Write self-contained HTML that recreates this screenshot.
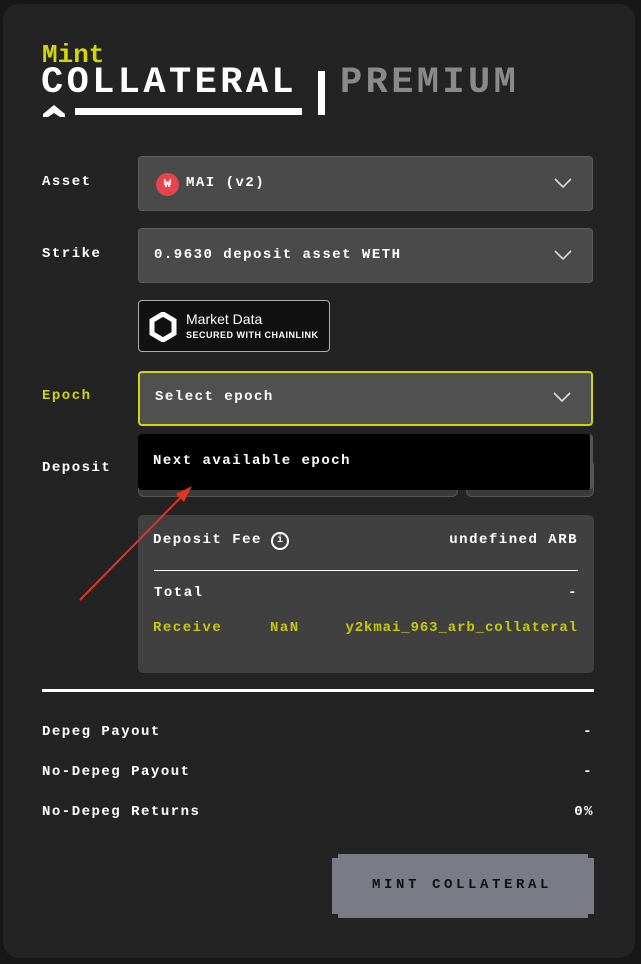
<!DOCTYPE html>
<html><head><meta charset="utf-8"><style>
*{box-sizing:border-box;margin:0;padding:0}
body{width:641px;height:964px;background:#171717;font-family:"Liberation Mono",monospace;font-weight:bold;color:#fff;position:relative;overflow:hidden}
.card{position:absolute;left:3px;top:4px;width:632px;height:954px;background:#232323;border-radius:16px}
.a{position:absolute}
.t{font-size:14px;letter-spacing:1.5px;white-space:nowrap}
.sel{position:absolute;left:138px;width:455px;height:55px;background:#4a4a4a;border:1px solid #5c5c5c;border-radius:4px}
.sel .t{position:absolute;left:15px;top:18px}
.chev{position:absolute;right:20px;top:21px}
.lbl{position:absolute;left:42px}
</style></head><body>
<div class="card"></div>
<div class="a" style="left:42px;top:40px;font-size:26px;color:#d4d40a;letter-spacing:0px">Mint</div>
<div class="a" style="left:41px;top:62px;font-size:37px;letter-spacing:3.4px">COLLATERAL</div>
<div class="a" style="left:340px;top:62px;font-size:37px;letter-spacing:3.4px;color:#8a8a8a">PREMIUM</div>
<div class="a" style="left:318px;top:71px;width:7px;height:44px;background:#fff"></div>
<div class="a" style="left:75px;top:108px;width:227px;height:7px;background:#fff"></div>
<svg class="a" style="left:42px;top:105px" width="24" height="16"><polygon points="12,0 23,9 23,12 18,12 12,8 6,12 1,12 1,9" fill="#fff"/></svg>

<div class="lbl t" style="top:174px">Asset</div>
<div class="sel" style="top:156px"><div class="a" style="left:17px;top:16px;width:23px;height:23px;border-radius:50%;background:#e8444c;color:#fff;font-size:12px;text-align:center;line-height:23px">₩</div><div class="t" style="left:47px!important">MAI (v2)</div><svg class="chev" width="18" height="11"><path d="M1 1 L9 9 L17 1" stroke="#ddd" stroke-width="1.6" fill="none"/></svg></div>
<div class="lbl t" style="top:246px">Strike</div>
<div class="sel" style="top:228px"><div class="t">0.9630 deposit asset WETH</div><svg class="chev" width="18" height="11"><path d="M1 1 L9 9 L17 1" stroke="#ddd" stroke-width="1.6" fill="none"/></svg></div>

<div class="a" style="left:138px;top:300px;width:192px;height:52px;background:#111;border:1px solid #aaa;border-radius:4px">
<svg class="a" style="left:10px;top:11px" width="28" height="30"><polygon points="14,2 25,8.5 25,21.5 14,28 3,21.5 3,8.5" fill="none" stroke="#fff" stroke-width="5"/></svg>
<div class="a" style="left:47px;top:10px;font-family:'Liberation Sans',sans-serif;font-size:14px;font-weight:normal">Market Data</div>
<div class="a" style="left:47px;top:29px;font-family:'Liberation Sans',sans-serif;font-size:9px;letter-spacing:0.5px">SECURED WITH CHAINLINK</div>
</div>

<div class="lbl t" style="top:388px;color:#d4d40a">Epoch</div>
<div class="sel" style="top:371px;border:2px solid #d4d40a;background:#505050"><div class="t" style="top:16px">Select epoch</div><svg class="chev" width="18" height="11" style="top:19px"><path d="M1 1 L9 9 L17 1" stroke="#ddd" stroke-width="1.6" fill="none"/></svg></div>

<div class="lbl t" style="top:460px">Deposit</div>
<div class="a" style="left:138px;top:460px;width:320px;height:37px;background:#3a3a3a;border:1px solid #555;border-radius:6px"></div>
<div class="a" style="left:466px;top:460px;width:128px;height:37px;background:#3a3a3a;border:1px solid #555;border-radius:6px"></div>
<div class="a" style="left:138px;top:434px;width:455px;height:56px;background:#000;border-radius:4px;border-right:3px solid #555"><div class="t a" style="left:15px;top:19px">Next available epoch</div></div>

<div class="a" style="left:138px;top:515px;width:456px;height:158px;background:#404040;border-radius:5px">
<div class="t a" style="left:15px;top:17px">Deposit Fee</div>
<div class="a" style="left:133px;top:17px;width:18px;height:18px;border:2px solid #fff;border-radius:50%;font-size:10px;text-align:center;line-height:14px">i</div>
<div class="t a" style="right:16px;top:17px">undefined ARB</div>
<div class="a" style="left:16px;top:55px;width:424px;height:1px;background:#fff"></div>
<div class="t a" style="left:16px;top:70px">Total</div>
<div class="t a" style="right:16px;top:70px">-</div>
<div class="t a" style="left:15px;top:105px;color:#c8c80c">Receive</div>
<div class="t a" style="left:132px;top:105px;color:#c8c80c">NaN</div>
<div class="t a" style="right:16px;top:105px;color:#c8c80c;letter-spacing:0.9px">y2kmai_963_arb_collateral</div>
</div>

<svg class="a" style="left:76px;top:484px" width="120" height="120"><line x1="4" y1="116" x2="112" y2="6" stroke="#e8321e" stroke-width="2"/><polygon points="116,2 100,10 108,18" fill="#e8321e"/></svg>

<div class="a" style="left:42px;top:689px;width:552px;height:3px;background:#fff"></div>
<div class="lbl t" style="top:724px">Depeg Payout</div><div class="t a" style="right:48px;top:724px">-</div>
<div class="lbl t" style="top:764px">No-Depeg Payout</div><div class="t a" style="right:48px;top:764px">-</div>
<div class="lbl t" style="top:804px">No-Depeg Returns</div><div class="t a" style="right:47px;top:804px">0%</div>

<div class="a" style="left:332px;top:854px;width:262px;height:64px;background:#7b7b86;clip-path:polygon(6px 0,calc(100% - 6px) 0,calc(100% - 6px) 4px,100% 4px,100% calc(100% - 4px),calc(100% - 6px) calc(100% - 4px),calc(100% - 6px) 100%,6px 100%,6px calc(100% - 4px),0 calc(100% - 4px),0 4px,6px 4px)"><div class="t a" style="left:40px;top:23px;color:#111;font-size:14px;letter-spacing:3.6px">MINT COLLATERAL</div></div>
</body></html>
